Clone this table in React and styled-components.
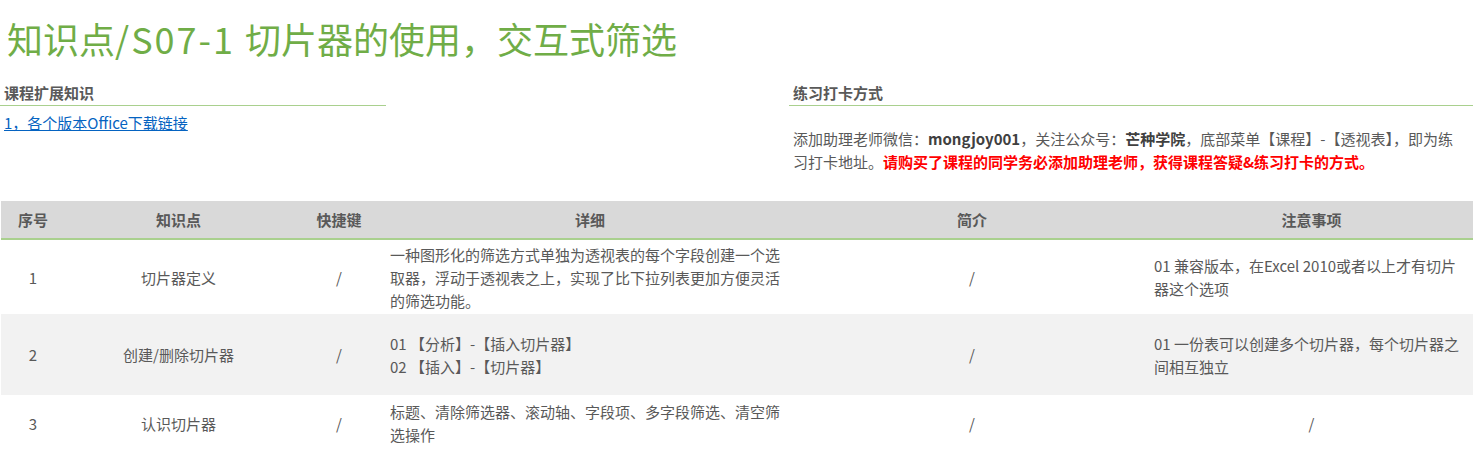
import React from 'react'
import styled, { createGlobalStyle } from 'styled-components'

const GlobalStyle = createGlobalStyle`
    body {
        margin: 0;
        background: #ffffff;
        font-family: "Noto Sans CJK SC", "Noto Sans", sans-serif;
        color: #595959;
    }
`

const Page = styled.div`
    width: 1473px;
`

const Title = styled.h1`
    margin: 0;
    padding: 18px 7px 0;
    font-size: 36px;
    line-height: 40px;
    font-weight: 400;
    color: #70ad47;
`

const Code = styled.span`
    letter-spacing: 2px;
`

const InfoGrid = styled.div`
    margin-top: 25px;
    display: grid;
    grid-template-columns: 386px 1fr;
    column-gap: 403px;
`

const Section = styled.section`
    display: flex;
    flex-direction: column;
`

const Heading = styled.h3`
    margin: 0;
    padding: 0 4px 2px;
    font-size: 15px;
    line-height: 20px;
    font-weight: 700;
    color: #595959;
    border-bottom: 1px solid #a9d08e;
`

const DownloadLink = styled.a`
    margin-top: 7px;
    padding-left: 4px;
    font-size: 15px;
    line-height: 20px;
    color: #0563c1;
    text-decoration: underline;
`

const Notice = styled.p`
    margin: 21px 0 0;
    padding: 0 10px 0 4px;
    font-size: 15px;
    line-height: 23px;
    color: #595959;

    b {
        color: #404040;
    }
`

const Alert = styled.b`
    && {
        color: #ff0000;
    }
`

const Table = styled.table`
    margin: 28px 0 0 1px;
    width: 1472px;
    table-layout: fixed;
    border-collapse: collapse;
    font-size: 15px;
    line-height: 23px;
`

const HeadRow = styled.tr`
    height: 38px;
    background: #d9d9d9;
    border-bottom: 2px solid #a9d08e;
`

const HeadCell = styled.th`
    padding: 0 4px;
    font-weight: 700;
    color: #595959;
    text-align: center;
    vertical-align: middle;
`

const Row = styled.tr`
    height: ${(props) => props.$h}px;
    background: ${(props) => (props.$shade ? '#f2f2f2' : '#ffffff')};
`

const Cell = styled.td`
    padding: 0 4px;
    color: #595959;
    text-align: ${(props) => (props.$left ? 'left' : 'center')};
    vertical-align: middle;
`

const columns = [64, 227, 94, 408, 356, 323]

const rows = [
    {
        no: '1',
        point: '切片器定义',
        key: '/',
        detail: ['一种图形化的筛选方式单独为透视表的每个字段创建一个选取器，浮动于透视表之上，实现了比下拉列表更加方便灵活的筛选功能。'],
        intro: '/',
        note: '01 兼容版本，在Excel 2010或者以上才有切片器这个选项',
        h: 75,
    },
    {
        no: '2',
        point: '创建/删除切片器',
        key: '/',
        detail: ['01 【分析】-【插入切片器】', '02 【插入】-【切片器】'],
        intro: '/',
        note: '01 一份表可以创建多个切片器，每个切片器之间相互独立',
        h: 81,
        shade: true,
    },
    {
        no: '3',
        point: '认识切片器',
        key: '/',
        detail: ['标题、清除筛选器、滚动轴、字段项、多字段筛选、清空筛选操作'],
        intro: '/',
        note: '/',
        h: 56,
    },
]

const App = () => {
    return (
        <Page>
            <GlobalStyle />
            <Title>知识点<Code>/S07-1 </Code>切片器的使用，交互式筛选</Title>

            <InfoGrid>
                <Section>
                    <Heading>课程扩展知识</Heading>
                    <DownloadLink href="#">1，各个版本Office下载链接</DownloadLink>
                </Section>
                <Section>
                    <Heading>练习打卡方式</Heading>
                    <Notice>
                        添加助理老师微信：<b>mongjoy001</b>，关注公众号：<b>芒种学院</b>，底部菜单【课程】-【透视表】，即为练习打卡地址。
                        <Alert>请购买了课程的同学务必添加助理老师，获得课程答疑&amp;练习打卡的方式。</Alert>
                    </Notice>
                </Section>
            </InfoGrid>

            <Table>
                <colgroup>
                    {columns.map((w, i) => (
                        <col key={i} style={{ width: w }} />
                    ))}
                </colgroup>
                <thead>
                    <HeadRow>
                        <HeadCell>序号</HeadCell>
                        <HeadCell>知识点</HeadCell>
                        <HeadCell>快捷键</HeadCell>
                        <HeadCell>详细</HeadCell>
                        <HeadCell>简介</HeadCell>
                        <HeadCell>注意事项</HeadCell>
                    </HeadRow>
                </thead>
                <tbody>
                    {rows.map((r) => (
                        <Row key={r.no} $h={r.h} $shade={r.shade}>
                            <Cell>{r.no}</Cell>
                            <Cell>{r.point}</Cell>
                            <Cell>{r.key}</Cell>
                            <Cell $left>
                                {r.detail.map((line, i) => (
                                    <div key={i}>{line}</div>
                                ))}
                            </Cell>
                            <Cell>{r.intro}</Cell>
                            <Cell $left={r.note !== '/'}>{r.note}</Cell>
                        </Row>
                    ))}
                </tbody>
            </Table>
        </Page>
    )
}

export default App
